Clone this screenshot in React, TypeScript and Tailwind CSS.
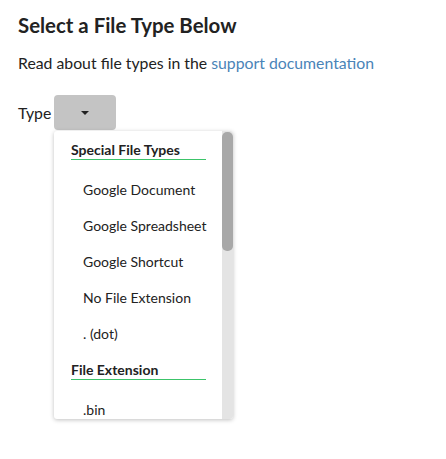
import React from 'react';

const specialTypes = ['Google Document', 'Google Spreadsheet', 'Google Shortcut', 'No File Extension', '. (dot)'];
const extensions = ['.bin'];

const GroupHeader: React.FC<{ label: string }> = ({ label }) => (
  <div className="pl-[17px] pr-[16px] pt-[11px]">
    <div className="pb-[1px] text-[14px] leading-[16px] font-bold text-[#222]">{label}</div>
    <div className="h-[1px] bg-[#3cc46a]" />
  </div>
);

const Option: React.FC<{ label: string }> = ({ label }) => (
  <div className="h-[36px] pl-[29px] flex items-center text-[14px] text-[#222]">{label}</div>
);

export default function App() {
  return (
    <div className="w-[446px] h-[459px] bg-white px-[18px] pt-[12px] text-[#222]" style={{ fontFamily: 'Lato, "Open Sans", sans-serif' }}>
      <h1 className="text-[20.4px] font-bold leading-[26px]">Select a File Type Below</h1>
      <p className="mt-[15px] text-[15.8px] leading-[20px]">
        Read about file types in the <a className="text-[#4a84b8]">support documentation</a>
      </p>
      <div className="mt-[22px] relative flex items-center gap-[3px]">
        <span className="text-[15.8px]">Type</span>
        <button type="button" className="w-[62px] h-[35px] rounded-[4px] bg-[#c4c4c4] flex items-center justify-center">
          <svg width="8" height="4" viewBox="0 0 8 4"><path d="M0 0h8L4 4z" fill="#222" /></svg>
        </button>
        <div className="absolute left-[36px] top-[36px] w-[179px] h-[288px] bg-white rounded-[3px] shadow-[0_1px_4px_rgba(0,0,0,0.25)] flex overflow-hidden">
          <div className="flex-1">
            <GroupHeader label="Special File Types" />
            <div className="pt-[11px]">
              {specialTypes.map(t => <Option key={t} label={t} />)}
            </div>
            <GroupHeader label="File Extension" />
            <div className="pt-[11px]">
              {extensions.map(t => <Option key={t} label={t} />)}
            </div>
          </div>
          <div className="w-[11px] bg-[#e4e4e4] flex flex-col pt-[1px]">
            <div className="h-[119px] bg-[#a8a8a8] rounded-[5px]" />
          </div>
        </div>
      </div>
    </div>
  );
}
